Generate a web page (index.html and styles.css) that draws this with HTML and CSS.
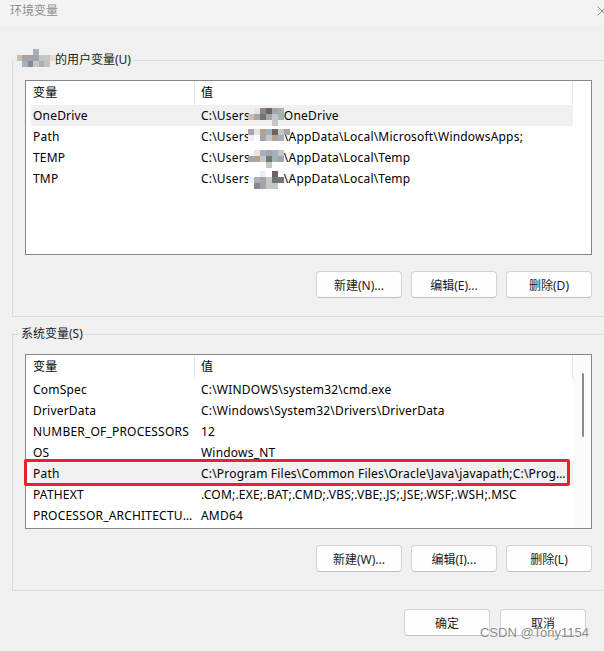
FILE: index.html
```html
<!DOCTYPE html>
<html lang="zh-CN">
<head>
<meta charset="utf-8">
<title>环境变量</title>
<link rel="stylesheet" href="styles.css">
</head>
<body>
<div class="window">
  <div class="titlebar">
    <span class="title">环境变量</span>
    <svg class="close" width="10" height="10" viewBox="0 0 10 10"><path d="M0.5 0.5 L9.5 9.5 M9.5 0.5 L0.5 9.5" stroke="#8a8a8a" stroke-width="1" fill="none"/></svg>
  </div>

  <fieldset class="group">
    <legend class="legend"><span class="mosaic mosaic-label"><i class="k0"></i><i class="k0"></i><i class="k0"></i><i class="k0"></i><i class="k6"></i><i class="k0"></i><i class="k0"></i><i class="k0"></i><i class="k9"></i><i class="k2"></i><i class="k3"></i><i class="k3"></i><i class="k3"></i><i class="k8"></i><i class="k8"></i><i class="k11"></i><i class="k0"></i><i class="k9"></i><i class="k6"></i><i class="k4"></i><i class="k8"></i><i class="k6"></i><i class="k2"></i><i class="k0"></i></span>的用户变量(U)</legend>
    <div class="list">
      <div class="rows">
        <div class="row head"><div class="c-name">变量</div><div class="c-val">值</div></div>
        <div class="row sel"><div class="c-name">OneDrive</div><div class="c-val">C:\Users<span class="mosaic"><i class="k0"></i><i class="k1"></i><i class="k4"></i><i class="k5"></i><i class="k3"></i><i class="k6"></i><i class="k0"></i><i class="k2"></i><i class="k3"></i><i class="k7"></i><i class="k3"></i><i class="k8"></i><i class="k6"></i><i class="k0"></i><i class="k0"></i><i class="k0"></i><i class="k0"></i><i class="k0"></i><i class="k8"></i><i class="k0"></i><i class="k0"></i></span>OneDrive</div></div>
        <div class="row"><div class="c-name">Path</div><div class="c-val">C:\Users<span class="mosaic"><i class="k3"></i><i class="k1"></i><i class="k10"></i><i class="k6"></i><i class="k5"></i><i class="k8"></i><i class="k3"></i><i class="k9"></i><i class="k0"></i><i class="k3"></i><i class="k8"></i><i class="k10"></i><i class="k6"></i><i class="k0"></i><i class="k0"></i><i class="k0"></i><i class="k0"></i><i class="k0"></i><i class="k0"></i><i class="k0"></i><i class="k0"></i></span>\AppData\Local\Microsoft\WindowsApps;</div></div>
        <div class="row"><div class="c-name">TEMP</div><div class="c-val">C:\Users<span class="mosaic"><i class="k0"></i><i class="k1"></i><i class="k6"></i><i class="k3"></i><i class="k6"></i><i class="k8"></i><i class="k0"></i><i class="k3"></i><i class="k10"></i><i class="k8"></i><i class="k7"></i><i class="k6"></i><i class="k3"></i><i class="k0"></i><i class="k0"></i><i class="k0"></i><i class="k0"></i><i class="k8"></i><i class="k0"></i><i class="k0"></i><i class="k0"></i></span>\AppData\Local\Temp</div></div>
        <div class="row"><div class="c-name">TMP</div><div class="c-val">C:\Users<span class="mosaic"><i class="k0"></i><i class="k0"></i><i class="k9"></i><i class="k0"></i><i class="k5"></i><i class="k0"></i><i class="k0"></i><i class="k9"></i><i class="k6"></i><i class="k3"></i><i class="k8"></i><i class="k7"></i><i class="k7"></i><i class="k0"></i><i class="k0"></i><i class="k4"></i><i class="k3"></i><i class="k8"></i><i class="k8"></i><i class="k0"></i><i class="k0"></i></span>\AppData\Local\Temp</div></div>
      </div>
      <div class="scroll-space"></div>
    </div>
    <div class="buttons">
      <button class="btn">新建(N)...</button>
      <button class="btn">编辑(E)...</button>
      <button class="btn">删除(D)</button>
    </div>
  </fieldset>

  <fieldset class="group group-sys">
    <legend class="legend">系统变量(S)</legend>
    <div class="list">
      <div class="rows">
        <div class="row head"><div class="c-name">变量</div><div class="c-val">值</div></div>
        <div class="row"><div class="c-name">ComSpec</div><div class="c-val">C:\WINDOWS\system32\cmd.exe</div></div>
        <div class="row"><div class="c-name">DriverData</div><div class="c-val">C:\Windows\System32\Drivers\DriverData</div></div>
        <div class="row"><div class="c-name">NUMBER_OF_PROCESSORS</div><div class="c-val">12</div></div>
        <div class="row"><div class="c-name">OS</div><div class="c-val">Windows_NT</div></div>
        <div class="row sel marked"><div class="c-name">Path</div><div class="c-val">C:\Program Files\Common Files\Oracle\Java\javapath;C:\Program Files (x86)\Common Files</div></div>
        <div class="row"><div class="c-name">PATHEXT</div><div class="c-val">.COM;.EXE;.BAT;.CMD;.VBS;.VBE;.JS;.JSE;.WSF;.WSH;.MSC</div></div>
        <div class="row"><div class="c-name">PROCESSOR_ARCHITECTURE</div><div class="c-val">AMD64</div></div>
      </div>
      <div class="scrollbar"><div class="thumb"></div></div>
    </div>
    <div class="buttons">
      <button class="btn">新建(W)...</button>
      <button class="btn">编辑(I)...</button>
      <button class="btn">删除(L)</button>
    </div>
  </fieldset>

  <div class="footer">
    <button class="btn btn-footer">确定</button>
    <button class="btn btn-footer">取消</button>
  </div>

  <div class="watermark">CSDN @Tony1154</div>
</div>
</body>
</html>
```

FILE: styles.css
```css
* { box-sizing: border-box; }
html, body { margin: 0; padding: 0; }
body {
  width: 604px;
  height: 651px;
  overflow: hidden;
  background: #f0f0f0;
  font-family: "Noto Sans", "Noto Sans CJK SC", sans-serif;
  font-size: 12px;
  letter-spacing: 0.2px;
  color: #000;
}
.window { position: relative; width: 604px; height: 651px; overflow: hidden; }

.titlebar {
  height: 26px;
  background: #f3f3f3;
  display: flex;
  align-items: flex-start;
  justify-content: space-between;
  padding: 2px 0 0 10px;
}
.title { color: #8f8f8f; line-height: 17px; letter-spacing: 0; }
.close { margin-top: 4px; margin-right: -3px; }

.group {
  margin: 26px 0 0 12px;
  padding: 0 0 18px 0;
  border: 1px solid #dcdcdc;
  width: 640px;
  min-width: 0;
}
.group-sys { margin-top: 9px; }
.legend {
  margin-left: 6px;
  padding: 0 2px;
  height: 16px;
  line-height: 16px;
  color: #1a1a1a;
  letter-spacing: 0;
}
.list {
  margin: 12px 0 0 12px;
  width: 567px;
  height: 175px;
  border: 1px solid #868686;
  background: #fff;
  padding-left: 5px;
  display: flex;
}
.rows { width: 542px; }
.row {
  display: grid;
  grid-template-columns: 164px 378px;
  height: 21px;
  line-height: 21px;
  position: relative;
}
.row.head { height: 24px; line-height: 24px; }
.row.head .c-name { border-right: 1px solid #e5e5e5; }
.row.head .c-val { border-right: 1px solid #e5e5e5; }
.row.sel { background: #f0f0f0; }
.c-name {
  padding: 0 1px 0 2px;
  white-space: nowrap;
  overflow: hidden;
  text-overflow: ellipsis;
}
.c-val {
  padding: 0 6px 0 6px;
  white-space: nowrap;
  overflow: hidden;
  text-overflow: ellipsis;
}
.row.marked::after {
  content: "";
  position: absolute;
  left: -7px;
  top: -4px;
  right: 3px;
  bottom: -2px;
  border: 3px solid #e8212b;
  border-radius: 2px;
}
.scroll-space { width: 18px; }
.scrollbar {
  width: 18px;
  background: #fafafa;
  padding: 18px 0 0 9px;
}
.thumb { width: 2px; height: 64px; background: #8a8a8a; border-radius: 1px; }

.mosaic {
  display: inline-grid;
  grid-template-columns: repeat(7, 6px);
  grid-auto-rows: 6px;
  vertical-align: middle;
  margin: 0 -6px 0 -2px;
  position: relative;
  z-index: 1;
}
.mosaic-label {
  grid-template-columns: repeat(8, 5.5px);
  vertical-align: top;
  margin: -3px 0 -5px -10px;
}
.mosaic i { display: block; }
.k0 { background: transparent; }
.k1 { background: #e9e3dd; }
.k2 { background: #cdbdb0; }
.k3 { background: #a6a3a9; }
.k4 { background: #8b8590; }
.k5 { background: #6f6066; }
.k6 { background: #a3b1bd; }
.k7 { background: #6c7876; }
.k8 { background: #c5c6c8; }
.k9 { background: #e9eff6; }
.k10 { background: #b3a390; }
.k11 { background: #f2d8c2; }

.buttons {
  margin: 16px 0 0 12px;
  width: 567px;
  display: flex;
  justify-content: flex-end;
  gap: 9px;
}
.btn {
  width: 86px;
  height: 27px;
  padding: 0;
  border: 1px solid #d3d3d3;
  border-bottom-color: #c0c0c0;
  border-radius: 4px;
  background: #fdfdfd;
  font-family: inherit;
  font-size: 12px;
  letter-spacing: 0;
  color: #1b1b1b;
}
.footer {
  margin-top: 18px;
  padding-right: 18px;
  display: flex;
  justify-content: flex-end;
  gap: 10px;
}
.btn-footer { width: 86px; }

.watermark {
  position: absolute;
  right: 15px;
  top: 625px;
  font-family: "Liberation Sans", sans-serif;
  font-size: 13px;
  letter-spacing: 0;
  color: #8a8a8a;
  text-shadow: 0 0 1px #fff, 0 0 1px #fff;
}
```
